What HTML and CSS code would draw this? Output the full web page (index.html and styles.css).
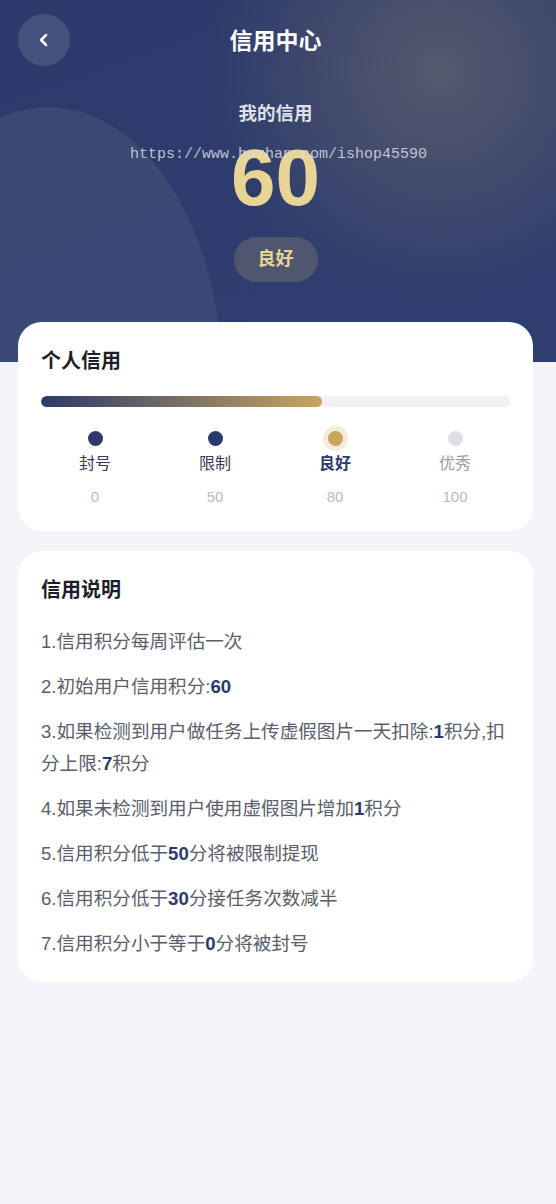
FILE: index.html
```html
<!DOCTYPE html>
<html lang="zh-CN">
<head>
    <meta charset="UTF-8">
    <meta name="viewport" content="width=device-width, initial-scale=1.0">
    <title>信用中心</title>
    <link rel="stylesheet" href="styles.css">
</head>
<body>
    <div class="page">
        <div class="hero">
            <div class="hero-circle"></div>
            <div class="topbar">
                <div class="back-btn">
                    <svg width="20" height="20" viewBox="0 0 24 24" fill="none" stroke="#fff" stroke-width="3" stroke-linecap="round" stroke-linejoin="round"><path d="M14.5 6l-6 6 6 6"/></svg>
                </div>
                <div class="topbar-title">信用中心</div>
            </div>
            <div class="hero-label">我的信用</div>
            <div class="hero-score">60</div>
            <div class="hero-badge">良好</div>
            <div class="watermark">https://www.huzhan.com/ishop45590</div>
        </div>

        <div class="card card-credit">
            <div class="card-title">个人信用</div>
            <div class="progress">
                <div class="progress-fill" style="width: 60%;"></div>
            </div>
            <div class="steps">
                <div class="step done">
                    <div class="dot-wrap"><span class="dot"></span></div>
                    <div class="step-name">封号</div>
                    <div class="step-value">0</div>
                </div>
                <div class="step done">
                    <div class="dot-wrap"><span class="dot"></span></div>
                    <div class="step-name">限制</div>
                    <div class="step-value">50</div>
                </div>
                <div class="step active">
                    <div class="dot-wrap"><span class="dot"></span></div>
                    <div class="step-name">良好</div>
                    <div class="step-value">80</div>
                </div>
                <div class="step">
                    <div class="dot-wrap"><span class="dot"></span></div>
                    <div class="step-name">优秀</div>
                    <div class="step-value">100</div>
                </div>
            </div>
        </div>

        <div class="card card-rules">
            <div class="card-title">信用说明</div>
            <ul class="rules">
                <li>1.信用积分每周评估一次</li>
                <li>2.初始用户信用积分:<b>60</b></li>
                <li>3.如果检测到用户做任务上传虚假图片一天扣除:<b>1</b>积分,扣分上限:<b>7</b>积分</li>
                <li>4.如果未检测到用户使用虚假图片增加<b>1</b>积分</li>
                <li>5.信用积分低于<b>50</b>分将被限制提现</li>
                <li>6.信用积分低于<b>30</b>分接任务次数减半</li>
                <li>7.信用积分小于等于<b>0</b>分将被封号</li>
            </ul>
        </div>
    </div>
</body>
</html>
```

FILE: styles.css
```css
:root {
    --navy: #2b3a6a;
    --gold: #c9a55f;
    --gold-light: #e8d596;
    --text: #5a5d6b;
    --page-bg: #f4f5f8;
}

* {
    box-sizing: border-box;
}

body {
    margin: 0;
    background: var(--page-bg);
    font-family: "Liberation Sans", "Noto Sans CJK SC", sans-serif;
}

.page {
    min-height: 1204px;
    padding-bottom: 40px;
}

/* header */
.hero {
    position: relative;
    height: 362px;
    padding-right: 5px;
    overflow: hidden;
    text-align: center;
    background:
        radial-gradient(circle at 440px 70px, rgba(125, 118, 110, 0.5), rgba(125, 118, 110, 0) 230px),
        linear-gradient(160deg, #2b3a6a 0%, #2e3d6d 60%, #2f3e70 100%);
}

.hero-circle {
    position: absolute;
    left: -124px;
    top: 107px;
    width: 346px;
    height: 546px;
    border-radius: 50%;
    background: rgba(255, 255, 255, 0.065);
}

.topbar {
    position: relative;
    height: 80px;
    display: flex;
    align-items: center;
    justify-content: center;
}

.back-btn {
    position: absolute;
    left: 18px;
    top: 14px;
    width: 52px;
    height: 52px;
    border-radius: 50%;
    background: rgba(255, 255, 255, 0.12);
    display: flex;
    align-items: center;
    justify-content: center;
}

.topbar-title {
    margin-top: -3px;
    color: #fff;
    font-size: 23px;
    font-weight: bold;
}

.hero-label {
    position: relative;
    margin-top: 22px;
    line-height: 24px;
    font-size: 18.5px;
    font-weight: bold;
    color: rgba(255, 255, 255, 0.85);
}

.hero-score {
    position: relative;
    margin-top: 12px;
    font-size: 80px;
    line-height: 80px;
    font-weight: bold;
    color: var(--gold-light);
}

.hero-badge {
    position: relative;
    margin: 19px auto 0;
    width: 84px;
    height: 45px;
    line-height: 45px;
    border-radius: 23px;
    background: #50566f;
    color: var(--gold-light);
    font-size: 18px;
    font-weight: bold;
}

.watermark {
    position: absolute;
    left: 130px;
    top: 146px;
    font-family: "Liberation Mono", "Courier New", monospace;
    font-size: 15px;
    line-height: 18px;
    color: rgba(220, 220, 225, 0.85);
    white-space: nowrap;
}

/* cards */
.card {
    position: relative;
    margin: 0 23px 0 18px;
    background: #fff;
    border-radius: 24px;
    padding: 25px 23px 24px;
}

.card-credit {
    margin-top: -40px;
}

.card-rules {
    margin-top: 20px;
    padding-bottom: 22px;
}

.card-title {
    font-size: 20px;
    line-height: 28px;
    font-weight: bold;
    color: #1c1d28;
}

.progress {
    margin-top: 21px;
    height: 11px;
    border-radius: 6px;
    background: #f0f0f5;
    overflow: hidden;
}

.progress-fill {
    height: 100%;
    border-radius: 6px;
    background: linear-gradient(90deg, var(--navy), var(--gold));
}

.steps {
    display: grid;
    grid-template-columns: repeat(4, 120px);
    margin: 18px -6px 0;
    text-align: center;
}

.dot-wrap {
    height: 26px;
    display: flex;
    align-items: center;
    justify-content: center;
}

.dot {
    width: 15px;
    height: 15px;
    border-radius: 50%;
    background: #dcdfe8;
}

.step.done .dot {
    background: var(--navy);
}

.step.active .dot {
    background: var(--gold);
    box-shadow: 0 0 0 5px #f3eadb;
}

.step-name {
    margin-top: 2px;
    font-size: 16px;
    line-height: 22px;
    color: #9b9ca8;
}

.step.done .step-name {
    color: #353b58;
}

.step.active .step-name {
    color: var(--navy);
    font-weight: bold;
}

.step-value {
    margin-top: 12px;
    font-size: 15px;
    line-height: 20px;
    color: #b4bbca;
}

.rules {
    list-style: none;
    margin: 22px 0 0;
    padding: 0;
}

.rules li {
    font-size: 18.6px;
    line-height: 32px;
    color: var(--text);
    margin-bottom: 13px;
}

.rules li:last-child {
    margin-bottom: 0;
}

.rules b {
    color: var(--navy);
}
```
